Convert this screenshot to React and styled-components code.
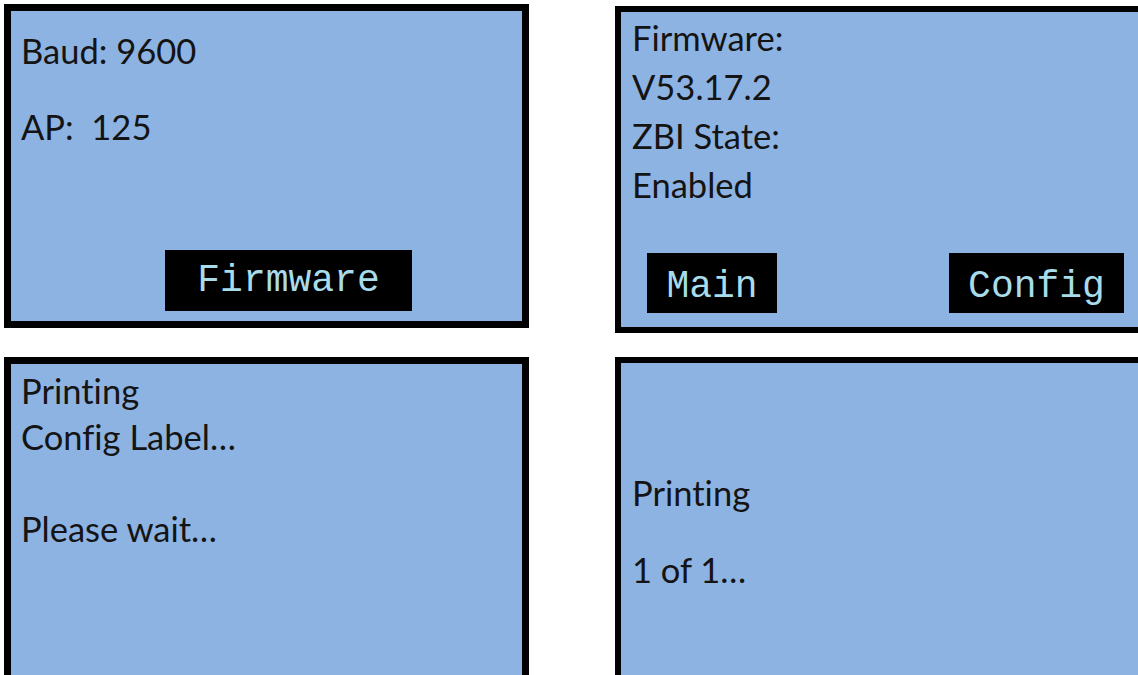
import React from "react";
import styled, { createGlobalStyle } from "styled-components";

const GlobalStyle = createGlobalStyle`
  html, body {
    margin: 0;
    padding: 0;
    background: #ffffff;
    overflow: hidden;
  }
`;

const Page = styled.div`
  display: grid;
  grid-template-columns: 525px 532px;
  column-gap: 86px;
  row-gap: 24px;
  padding: 4px 0 0 4px;
  align-items: start;
`;

const Panel = styled.section`
  box-sizing: border-box;
  height: ${(p) => p.$h}px;
  margin-top: ${(p) => p.$top || 0}px;
  border: ${(p) => p.$bw || 7}px solid #000;
  background: #8db3e2;
  display: flex;
  flex-direction: column;
`;

const Lines = styled.div`
  display: flex;
  flex-direction: column;
  padding: ${(p) => p.$pad};
  font-family: Lato, "Open Sans", sans-serif;
  font-size: 34.5px;
  font-variant-ligatures: none;
  line-height: ${(p) => p.$lh}px;
  color: #141414;
`;

const Line = styled.p`
  margin: 0;
  white-space: pre;
`;

const ButtonRow = styled.div`
  margin-top: auto;
  display: flex;
  justify-content: ${(p) => p.$justify || "flex-start"};
  padding: ${(p) => p.$pad};
`;

const SoftKey = styled.div`
  box-sizing: border-box;
  width: ${(p) => p.$w}px;
  height: ${(p) => p.$h}px;
  padding-top: ${(p) => p.$pt || 0}px;
  background: #000;
  color: #a8dcea;
  font-family: "Liberation Mono", "Courier New", monospace;
  font-size: 38px;
  line-height: ${(p) => p.$lh}px;
  text-align: center;
`;

export default function App() {
  return (
    <>
      <GlobalStyle />
      <Page>
        <Panel $h={324}>
          <Lines $pad="21px 0 0 10px" $lh={38}>
            <Line>Baud: 9600</Line>
            <Line> </Line>
            <Line>AP:  125</Line>
          </Lines>
          <ButtonRow $pad="0 0 10px 154px">
            <SoftKey $w={247} $h={61} $lh={61}>
              Firmware
            </SoftKey>
          </ButtonRow>
        </Panel>

        <Panel $h={327} $top={2} $bw={6}>
          <Lines $pad="1px 0 0 11px" $lh={49}>
            <Line>Firmware:</Line>
            <Line>V53.17.2</Line>
            <Line>ZBI State:</Line>
            <Line>Enabled</Line>
          </Lines>
          <ButtonRow $justify="space-between" $pad="0 17px 14px 26px">
            <SoftKey $w={130} $h={60} $lh={60} $pt={4}>
              Main
            </SoftKey>
            <SoftKey $w={175} $h={60} $lh={60} $pt={4}>
              Config
            </SoftKey>
          </ButtonRow>
        </Panel>

        <Panel $h={325}>
          <Lines $pad="4px 0 0 10px" $lh={46}>
            <Line>Printing</Line>
            <Line>Config Label…</Line>
            <Line> </Line>
            <Line>Please wait…</Line>
          </Lines>
        </Panel>

        <Panel $h={325} $bw={6}>
          <Lines $pad="91px 0 0 11px" $lh={77}>
            <Line>Printing</Line>
            <Line>1 of 1…</Line>
          </Lines>
        </Panel>
      </Page>
    </>
  );
}
